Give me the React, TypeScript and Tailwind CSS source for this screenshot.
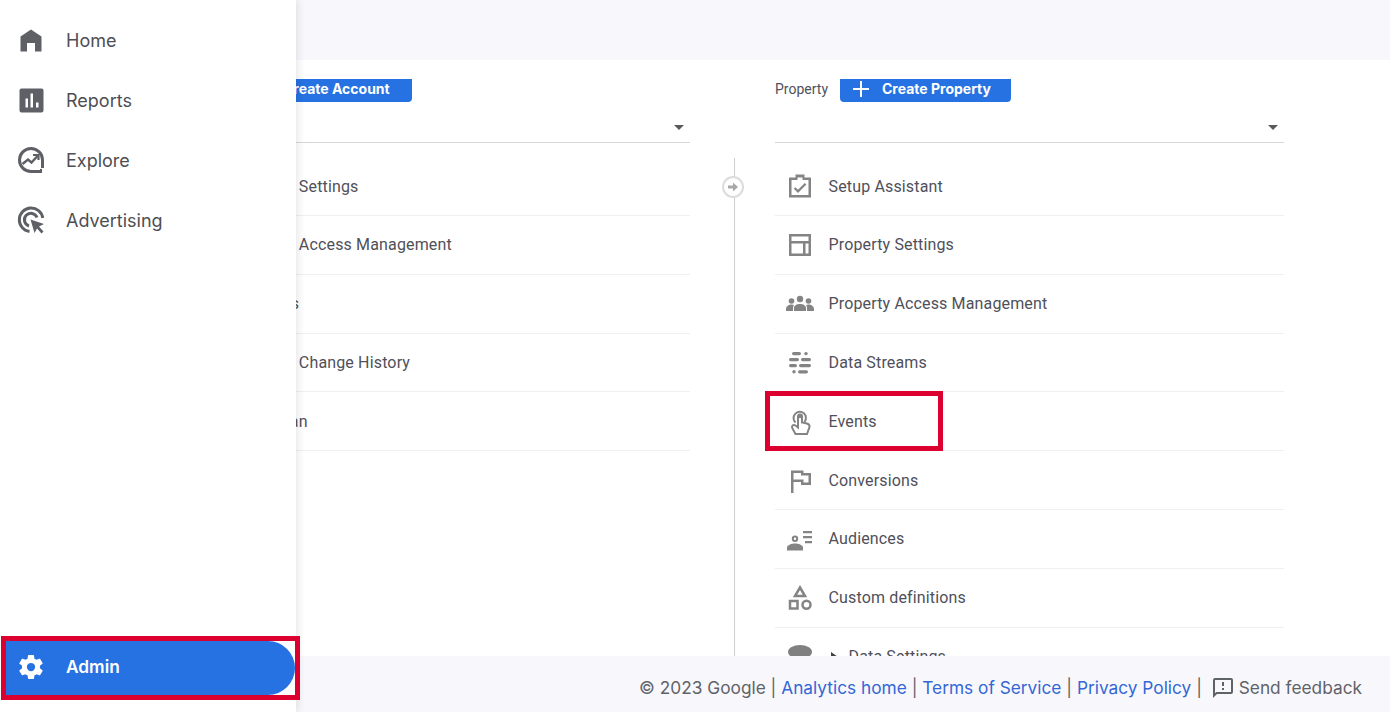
import React from "react";

const Ic = ({ children, s = 24, vb = "0 0 24 24", c = "fill-[#848484]" }: { children: React.ReactNode; s?: number; vb?: string; c?: string }) => (
  <svg width={s} height={s} viewBox={vb} className={c}>{children}</svg>
);

const NavHome = () => (
  <Ic s={28} vb="0 0 28 28" c="fill-[#5f6066]">
    <path d="M14 3.500 L24.500 10.500 V25.500 H18 V17 H10 V25.500 H3.500 V10.500 Z" />
  </Ic>
);
const NavReports = () => (
  <Ic s={28} vb="0 0 28 28" c="fill-[#5f6066]">
    <path fillRule="evenodd" d="M4.500 2.500h20a2 2 0 0 1 2 2v20a2 2 0 0 1-2 2h-20a2 2 0 0 1-2-2v-20a2 2 0 0 1 2-2Zm4 10v9h2.500v-9Zm5-5v14H16V7.500Zm5.500 9V21.500h2.500V16.500Z" />
  </Ic>
);
const NavExplore = () => (
  <svg width="28" height="28" viewBox="0 0 28 28" fill="none" stroke="#5f6066" strokeWidth="3">
    <path d="M25 25.500 H14 A11.500 11.500 0 1 1 25.500 14 V22" />
    <path d="M5.500 18 l5.500-4.500 3.500 3 6-6.500" strokeWidth="2.400" />
    <path d="M16 9 h5.500 v5" strokeWidth="2.200" />
    <circle cx="24" cy="24" r="1.200" fill="#5f6066" stroke="none" />
  </svg>
);
const NavAdvertising = () => (
  <svg width="28" height="28" viewBox="0 0 28 28" fill="none" stroke="#5f6066" strokeWidth="3">
    <path d="M12.500 25.500 A11.800 11.800 0 1 1 25.800 12" />
    <path d="M12 20 A6.500 6.500 0 1 1 20 11.500" />
    <path d="M13.500 13.500 L27 18 L22 20.500 L26.500 25.500 L24.500 27.500 L20 22.500 L17.500 27 Z" fill="#5f6066" stroke="none" />
  </svg>
);

const Gear = () => (
  <svg width="30" height="30" viewBox="0 0 24 24" className="fill-white">
    <path d="M19.140 12.940c.04-.3.060-.61.060-.94 0-.32-.020-.64-.070-.94l2.030-1.580a.49.49 0 0 0 .12-.61l-1.920-3.320a.49.49 0 0 0-.59-.22l-2.390.96c-.5-.38-1.030-.7-1.620-.94l-.36-2.540a.48.48 0 0 0-.48-.41h-3.840a.47.47 0 0 0-.47.41l-.36 2.540c-.59.240-1.130.57-1.620.94l-2.390-.96a.49.49 0 0 0-.59.22L2.740 8.870a.48.48 0 0 0 .12.61l2.030 1.580c-.05.3-.09.63-.09.94s.020.64.070.94l-2.030 1.580a.49.49 0 0 0-.12.61l1.920 3.320c.12.22.37.29.59.22l2.390-.96c.5.38 1.030.7 1.620.94l.36 2.540c.05.24.24.41.48.41h3.840c.24 0 .44-.17.47-.41l.36-2.540c.59-.24 1.130-.56 1.620-.94l2.390.96c.22.08.47 0 .59-.22l1.920-3.320a.48.48 0 0 0-.12-.61l-2.010-1.580ZM12 15.300a3.300 3.300 0 1 1 0-6.600 3.300 3.300 0 0 1 0 6.600Z" />
  </svg>
);

const Setup = () => (
  <Ic s={28} vb="0 0 28 28">
    <path fillRule="evenodd" d="M3 5.500h6.500V2.500h9V5.500H25v20H3Zm2.500 2.500V23h17V8H16.500V5.500h-5V8Z" transform="translate(0 -1)" />
    <path d="M12 20 7.800 15.800l1.600-1.600 2.600 2.600 6.800-6.800 1.600 1.600Z" />
  </Ic>
);
const PropSettings = () => (
  <Ic s={28} vb="0 0 28 28"><path fillRule="evenodd" d="M3 3h22v22H3Zm2.500 2.500v4.500h17V5.500Zm0 7V22.500h11.500V12.500Zm14 0V22.500h3V12.500Z" /></Ic>
);
const People = () => (
  <Ic s={28} vb="0 0 28 28">
    <circle cx="14" cy="9" r="3.200" /><circle cx="5.500" cy="11" r="2.800" /><circle cx="22.500" cy="11" r="2.800" />
    <path d="M0 21v-2c0-2.500 2.800-4.500 5.500-4.500 1 0 1.800.2 2.500.5-.7.8-1 1.800-1 3v3Zm8 0v-3c0-2.500 3-4 6-4s6 1.500 6 4v3Zm13 0v-3c0-1.200-.3-2.200-1-3 .7-.3 1.500-.5 2.500-.5 2.700 0 5.500 2 5.500 4.500v2Z" />
  </Ic>
);
const Streams = () => (
  <Ic s={28} vb="0 0 28 28">
    <rect x="6" y="3" width="9" height="3.200" rx="1.600" /><circle cx="20" cy="4.600" r="1.700" />
    <rect x="3" y="9" width="10" height="3.200" rx="1.600" /><rect x="15" y="9" width="10" height="3.200" rx="1.600" />
    <rect x="3" y="15" width="8" height="3.200" rx="1.600" /><rect x="13" y="15" width="12" height="3.200" rx="1.600" />
    <circle cx="8" cy="22.800" r="1.700" /><rect x="12" y="21.200" width="10" height="3.200" rx="1.600" />
  </Ic>
);
const Touch = () => (
  <svg width="28" height="28" viewBox="0 0 28 28" fill="none" stroke="#848484" strokeWidth="1.800">
    <path d="M9.500 14.500 A6.200 6.200 0 1 1 18.500 14" strokeWidth="2" />
    <path d="M12 8.500 V19.500 L9.500 17.500 C7 16 5 18.500 6.500 20.500 L9.500 26 H21 L23.500 19 C23.800 17 22.500 16 21 15.500 L16 14.500 V8.500 a2 2 0 0 0 -4 0 Z" strokeWidth="2" />
    <circle cx="14" cy="8" r="2.200" fill="#848484" stroke="none" />
  </svg>
);
const Flag = () => (
  <Ic s={28} vb="0 0 28 28"><path fillRule="evenodd" d="M5 3.500h12.500v2.500H25v12H15v-3H7.500v11H5Zm2.500 2.500v6.500h10v3H22.500V8.500H15V6Z" /></Ic>
);
const Audience = () => (
  <Ic s={28} vb="0 0 28 28">
    <path fillRule="evenodd" d="M9 10.500a3.200 3.200 0 1 1 0 6.400 3.200 3.200 0 0 1 0-6.400Zm0 2a1.200 1.200 0 1 0 0 2.400 1.200 1.200 0 0 0 0-2.400Z" />
    <path d="M1 25.500v-3c0-2.500 5-4 8-4s8 1.500 8 4v3Z" />
    <path d="M17 6h9v2.200H17Zm0 5h9v2.200H17Zm2 5h7v2.200h-7Z" />
  </Ic>
);
const Shapes = () => (
  <svg width="28" height="28" viewBox="0 0 28 28" fill="none" stroke="#848484" strokeWidth="2.500">
    <path d="M14 3.500 L19 12 H9 Z" /><rect x="4" y="17" width="7.500" height="7.500" /><circle cx="20.500" cy="20.800" r="4" />
  </svg>
);

const Row = ({ icon, label, boxed }: { icon?: React.ReactNode; label: React.ReactNode; boxed?: boolean }) => (
  <div className="relative flex h-[58.800px] shrink-0 items-center border-b border-[#efefef] pt-[1px]">
    <div className="flex w-[53.500px] justify-center pr-[3.500px]">{icon}</div>
    <span className="text-[16px] tracking-[0.15px] text-[#50505a]">{label}</span>
    {boxed && <div className="absolute left-[-10px] top-[-1px] h-[60px] w-[178px] border-[5px] border-[#dc0030]" />}
  </div>
);

const Head = ({ label, btn, mr }: { label: string; btn: string; mr: string }) => (
  <div>
    <div className="flex h-[23px] items-center">
      <span className={`pb-[2px] text-[14px] text-[#50505a] ${mr}`}>{label}</span>
      <div className="flex h-[23px] w-[171px] items-center rounded-b-[4px] bg-[#2672e2] pb-[4px] pl-[12px] text-white">
        <svg width="18" height="18" viewBox="0 0 18 18" stroke="white" strokeWidth="2"><path d="M9 1v16M1 9h16" /></svg>
        <span className="ml-[12px] whitespace-nowrap font-['Inter',sans-serif] text-[14px] font-bold">{btn}</span>
      </div>
    </div>
    <div className="flex h-[41px] items-center justify-end border-b border-[#d6d6d6] pr-[6px] pt-[11px]">
      <div className="h-0 w-0 border-x-[5px] border-t-[5px] border-x-transparent border-t-[#5a5a5a]" />
    </div>
  </div>
);

const nav = [
  { i: <NavHome />, t: "Home" },
  { i: <NavReports />, t: "Reports" },
  { i: <NavExplore />, t: "Explore" },
  { i: <NavAdvertising />, t: "Advertising" },
];

export default function App() {
  return (
    <div className="relative flex h-[712px] w-[1390px] flex-col overflow-hidden bg-white font-['Roboto',sans-serif]">
      <div className="h-[60px] shrink-0 bg-[#f8f8fc]" />
      <div className="flex min-h-0 flex-1 overflow-hidden pl-[181px] pt-[19px]">
        <div className="w-[509px] shrink-0">
          <Head label="Account" btn="Create Account" mr="w-[60px]" />
          <div className="mt-[14.300px]">
            <Row label="Account Settings" />
            <Row label="Account Access Management" />
            <Row label="All filters" />
            <Row label="Account Change History" />
            <Row label="Trash Can" />
          </div>
        </div>
        <div className="relative flex w-[85px] shrink-0 justify-center">
          <div className="ml-[3px] mt-[79px] w-px bg-[#cfcfcf]" />
          <div className="absolute left-[31.500px] top-[97px] flex h-[22px] w-[22px] items-center justify-center rounded-full border-2 border-[#dcdcdc] bg-white">
            <svg width="12" height="12" viewBox="0 0 12 12" fill="#a8a8a8"><path d="M1 4.500h5V1.500L11 6 6 10.500V7.500H1Z" /></svg>
          </div>
        </div>
        <div className="w-[509px] shrink-0">
          <Head label="Property" btn="Create Property" mr="w-[65px]" />
          <div className="mt-[14.300px]">
            <Row icon={<Setup />} label="Setup Assistant" />
            <Row icon={<PropSettings />} label="Property Settings" />
            <Row icon={<People />} label="Property Access Management" />
            <Row icon={<Streams />} label="Data Streams" />
            <Row icon={<Touch />} label="Events" boxed />
            <Row icon={<Flag />} label="Conversions" />
            <Row icon={<Audience />} label="Audiences" />
            <Row icon={<Shapes />} label="Custom definitions" />
            <Row
              icon={<div className="mb-[10px] h-[14px] w-[24px] rounded-[50%] bg-[#808080]" />}
              label={<span className="flex items-center"><span className="mr-[11px] ml-[2px] h-0 w-0 border-y-[5px] border-l-[7px] border-y-transparent border-l-[#404040]" />Data Settings</span>}
            />
          </div>
        </div>
      </div>
      <div className="flex h-[56px] shrink-0 items-center justify-end bg-[#f8f8fc] pr-[28px] pt-[7px] font-['Inter',sans-serif] text-[17.300px] text-[#5f6368]">
        <span>© 2023 Google |&nbsp;</span>
        <span className="text-[#3367d6]">Analytics home</span>
        <span>&nbsp;|&nbsp;</span>
        <span className="text-[#3367d6]">Terms of Service</span>
        <span>&nbsp;|&nbsp;</span>
        <span className="text-[#3367d6]">Privacy Policy</span>
        <span>&nbsp;|&nbsp;</span>
        <svg width="24" height="24" viewBox="0 0 24 24" className="ml-[4px] mr-[4px] fill-[#5f6368]">
          <path d="M20 2H4a2 2 0 0 0-2 2v18l4-4h14a2 2 0 0 0 2-2V4a2 2 0 0 0-2-2Zm0 14H5.200L4 17.200V4h16Z" />
          <path d="M11 12h2v2h-2Zm0-6h2v4h-2Z" />
        </svg>
        <span>Send feedback</span>
      </div>

      <aside className="absolute inset-y-0 left-0 flex w-[296px] flex-col justify-between bg-white pb-[17px] pt-[10px] font-['Inter',sans-serif] shadow-[2px_0_8px_rgba(0,0,0,0.10)]">
        <div>
          {nav.map((n) => (
            <div key={n.t} className="flex h-[60px] items-center">
              <div className="flex w-[66px] justify-center pr-[4px]">{n.i}</div>
              <span className="text-[18px] text-[#4e4e54]">{n.t}</span>
            </div>
          ))}
        </div>
        <div className="ml-[6px] flex h-[54px] w-[289px] items-center rounded-r-[27px] bg-[#2672e2] pb-[3px]">
          <div className="ml-[-6px] flex w-[66px] justify-center pr-[4px]"><Gear /></div>
          <span className="text-[17.300px] font-semibold text-white">Admin</span>
        </div>
      </aside>
      <div className="absolute left-[1px] top-[636px] h-[64px] w-[299px] border-[5px] border-[#dc0030]" />
    </div>
  );
}
